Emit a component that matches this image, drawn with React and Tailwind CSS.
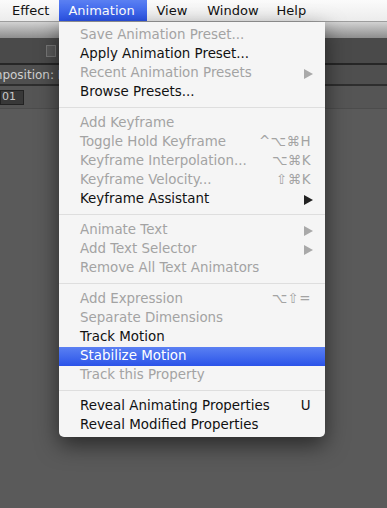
import React from "react";

const Arrow = ({ disabled }) => (
  <svg width="9" height="10" viewBox="0 0 9 10" className="block">
    <path d="M0 0 L9 5 L0 10 Z" fill={disabled ? "#a9a9a9" : "#222"} />
  </svg>
);

const groups = [
  [
    { t: "Save Animation Preset...", d: true },
    { t: "Apply Animation Preset..." },
    { t: "Recent Animation Presets", d: true, arrow: true },
    { t: "Browse Presets..." },
  ],
  [
    { t: "Add Keyframe", d: true },
    { t: "Toggle Hold Keyframe", d: true, k: "^⌥⌘H" },
    { t: "Keyframe Interpolation...", d: true, k: "⌥⌘K" },
    { t: "Keyframe Velocity...", d: true, k: "⇧⌘K" },
    { t: "Keyframe Assistant", arrow: true },
  ],
  [
    { t: "Animate Text", d: true, arrow: true },
    { t: "Add Text Selector", d: true, arrow: true },
    { t: "Remove All Text Animators", d: true },
  ],
  [
    { t: "Add Expression", d: true, k: "⌥⇧=" },
    { t: "Separate Dimensions", d: true },
    { t: "Track Motion" },
    { t: "Stabilize Motion", hl: true },
    { t: "Track this Property", d: true },
  ],
  [
    { t: "Reveal Animating Properties", k: "U" },
    { t: "Reveal Modified Properties" },
  ],
];

function Item({ it }) {
  const color = it.hl ? "text-white" : it.d ? "text-[#a3a3a3]" : "text-[#111]";
  return (
    <div
      className={`h-[19px] flex items-center justify-between pl-[21px] pr-[12px] ${color} ${
        it.hl ? "bg-gradient-to-b from-[#5b80f2] to-[#2b52e9]" : ""
      }`}
    >
      <span>{it.t}</span>
      {it.k && <span className="pr-[2px] tracking-[0.5px]">{it.k}</span>}
      {it.arrow && (
        <span>
          <Arrow disabled={it.d} />
        </span>
      )}
    </div>
  );
}

export default function App() {
  return (
    <div
      className="relative w-[387px] h-[508px] overflow-hidden bg-[#5a5a5a] text-[13.4px]"
      style={{ fontFamily: '"DejaVu Sans", "Noto Sans", sans-serif' }}
    >
      {/* menu bar */}
      <div className="h-[22px] flex items-center bg-gradient-to-b from-[#fbfbfb] to-[#ececec] border-b border-[#9d9d9d] text-[#111] text-[13px]">
        <div className="h-full flex items-center pl-[12px] pr-[10px]">Effect</div>
        <div className="h-full w-[88px] flex items-center pl-[9px] bg-gradient-to-b from-[#5b80f2] to-[#2b52e9] text-white">
          Animation
        </div>
        <div className="h-full flex items-center pl-[9px] pr-[10px]">View</div>
        <div className="h-full flex items-center pl-[10px] pr-[9px]">Window</div>
        <div className="h-full flex items-center pl-[9px]">Help</div>
      </div>
      {/* background app */}
      <div className="h-[16px] bg-gradient-to-b from-[#d2d2d2] to-[#8e8e8e]" />
      <div className="h-[25px] bg-[#4a4a4a] flex items-center pl-[46px]">
        <div className="w-[10px] h-[12px] border border-[#777] bg-[#5a5a5a]" />
      </div>
      <div className="h-[2px] bg-[#262626]" />
      <div className="h-[19px] bg-[#4f4f4f] flex items-center overflow-hidden">
        <span className="ml-[-25px] text-[12px] text-[#cfcfcf] whitespace-nowrap">Composition: D</span>
      </div>
      <div className="h-[2px] bg-[#2e2e2e]" />
      <div className="h-[22px] bg-[#555] flex items-center">
        <div className="h-[15px] w-[24px] bg-[#383838] border border-[#222] flex items-center text-[11px] text-[#c8c8c8] pl-[1px]">
          01
        </div>
      </div>
      <div className="h-[1px] bg-[#4c4c4c]" />

      {/* menu */}
      <div className="absolute left-[59px] top-[22px] w-[266px] bg-[#f5f5f5] rounded-b-[5px] pt-[4px] pb-[2px] shadow-[0_8px_22px_rgba(0,0,0,0.55)]">
        {groups.map((g, gi) => (
          <div key={gi}>
            {gi > 0 && (
              <div className="h-[12px] flex items-center">
                <div className="w-full h-[1px] bg-[#dedede] -mt-[1px]" />
              </div>
            )}
            {g.map((it, i) => (
              <Item key={i} it={it} />
            ))}
          </div>
        ))}
      </div>
    </div>
  );
}
